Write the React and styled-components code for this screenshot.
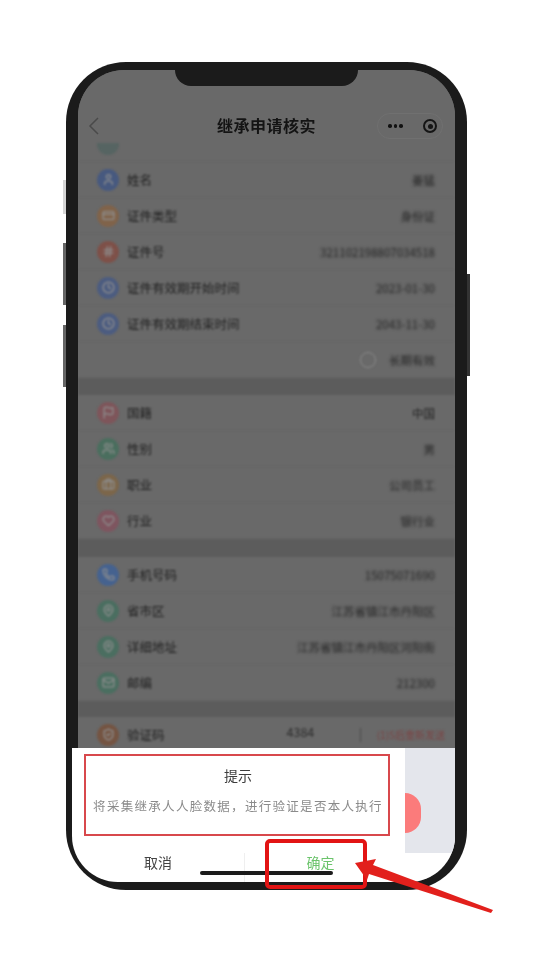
import React from 'react';
import styled, { createGlobalStyle } from 'styled-components';
import { User, CreditCard, Hash, Clock, Flag, Users, Briefcase, Heart, Phone as PhoneIcon, MapPin, Mail, ShieldCheck } from 'lucide-react';

const Global = createGlobalStyle`
  html, body { margin: 0; padding: 0; background: #fff; }
  body { font-family: "Noto Sans CJK SC", "Liberation Sans", sans-serif; }
`;

const Page = styled.div`
  position: relative;
  width: 539px;
  height: 957px;
  overflow: hidden;
  padding: 62px 0 0 66px;
  box-sizing: border-box;
  filter: blur(0.5px);
`;
const Device = styled.div`
  position: relative;
  width: 401px;
  height: 828px;
  box-sizing: border-box;
  padding: 8px 12px 8px 12px;
  background: #1b1b1b;
  border-radius: 60px;
`;
const SideKey = styled.span`
  position: absolute;
  top: ${p => p.$top}px;
  height: ${p => p.$h}px;
  width: 3px;
  background: ${p => p.$c};
  ${p => (p.$right ? 'right: -3px;' : 'left: -3px;')}
`;
const Screen = styled.div`
  display: flex;
  flex-direction: column;
  height: 100%;
  overflow: hidden;
  background: #696969;
  border-radius: 46px;
`;
const Notch = styled.div`
  position: absolute;
  z-index: 2;
  top: 6px;
  left: 109px;
  width: 183px;
  height: 18px;
  background: #1b1b1b;
  border-radius: 0 0 16px 16px;
`;
const NavBar = styled.header`
  flex: none;
  height: 73px;
  padding-top: 43px;
  box-sizing: border-box;
  display: grid;
  grid-template-columns: 1fr auto 1fr;
  align-items: start;
  background: #696969;
`;
const BackIcon = styled.svg`
  width: 12px;
  height: 20px;
  margin: 3px 0 0 10px;
`;
const Title = styled.h1`
  margin: 0;
  text-align: center;
  font-size: 16px;
  line-height: 24px;
  letter-spacing: 0.5px;
  font-weight: 700;
  color: #141414;
  filter: blur(0.3px);
`;
const Capsule = styled.div`
  justify-self: end;
  width: 66px;
  height: 26px;
  margin-right: 12px;
  display: flex;
  align-items: center;
  justify-content: space-between;
  padding: 0 5px 0 10px;
  box-sizing: border-box;
  border: 1px solid #707070;
  border-radius: 13px;
`;
const Dots = styled.span`
  display: flex;
  gap: 2px;
  i { width: 3.5px; height: 3.5px; border-radius: 50%; background: #111; }
`;
const Target = styled.span`
  width: 14px;
  height: 14px;
  box-sizing: border-box;
  border: 2px solid #151515;
  border-radius: 50%;
  display: flex;
  align-items: center;
  justify-content: center;
  &::after { content: ""; width: 5px; height: 5px; border-radius: 50%; background: #151515; }
`;
const List = styled.div`
  flex: 1;
  min-height: 0;
  overflow: hidden;
  filter: blur(0.8px);
`;
const Rows = styled.div`
  margin-top: ${p => p.$offset || 0}px;
`;
const Row = styled.div`
  height: 36px;
  box-sizing: border-box;
  display: flex;
  align-items: center;
  padding: 0 20px 0 19px;
  border-bottom: 1px solid #656565;
`;
const Badge = styled.span`
  flex: none;
  width: 22px;
  height: 22px;
  border-radius: 50%;
  background: ${p => p.$c};
  display: flex;
  align-items: center;
  justify-content: center;
  color: #8e8e8e;
  margin-right: 8px;
`;
const Label = styled.span`
  font-size: 12.5px;
  color: #222;
  white-space: nowrap;
`;
const Value = styled.span`
  margin-left: ${p => (p.$inline ? '0' : 'auto')};
  font-size: 11.5px;
  color: #222;
  white-space: nowrap;
  filter: blur(${p => (p.$sharp ? 0 : 1.2)}px);
`;
const Radio = styled.span`
  width: 16px;
  height: 16px;
  box-sizing: border-box;
  border: 1px solid #8a8a8a;
  border-radius: 50%;
  margin: 0 13px 0 auto;
`;
const Band = styled.div`
  height: ${p => p.$h}px;
  background: #5c5c5c;
`;
const Code = styled.span`
  font-size: 12.5px;
  color: #2c2c2c;
  margin-left: 122px;
  transform: translateY(-3px);
`;
const Resend = styled.span`
  margin-left: auto;
  margin-right: -10px;
  padding-left: 16px;
  border-left: 1px solid #4c4c4c;
  font-size: 10px;
  line-height: 14px;
  color: #7b4444;
  white-space: nowrap;
`;
const Sheet = styled.section`
  position: absolute;
  left: 6px;
  right: 12px;
  top: 686px;
  bottom: 8px;
  display: flex;
  flex-direction: column;
  background: #fff;
  border-radius: 0 0 46px 46px;
  overflow: hidden;
`;
const SheetTop = styled.div`
  flex: none;
  height: 105px;
  display: flex;
`;
const Message = styled.div`
  flex: none;
  width: 333px;
  padding: 17px 0 0 21px;
  box-sizing: border-box;
  text-align: center;
`;
const MessageTitle = styled.div`
  font-size: 14px;
  line-height: 20px;
  color: #3c3c3c;
  width: 290px;
`;
const MessageBody = styled.div`
  margin-top: 13px;
  font-size: 12.5px;
  letter-spacing: 1.3px;
  line-height: 16px;
  color: #8b8b8b;
  width: 290px;
  white-space: nowrap;
`;
const Behind = styled.div`
  flex: 1;
  background: #e4e6ec;
  display: flex;
  align-items: flex-start;
`;
const HalfDot = styled.span`
  width: 16px;
  height: 40px;
  margin-top: 45px;
  background: #fb7b7b;
  border-radius: 0 20px 20px 0;
`;
const Actions = styled.div`
  flex: 1;
  display: grid;
  grid-template-columns: 172px 152px;
`;
const Action = styled.div`
  text-align: center;
  font-size: 14px;
  line-height: 18px;
  color: ${p => p.$c};
  & + & { border-left: 1px solid #efefef; }
`;
const HomeBar = styled.div`
  position: absolute;
  left: 134px;
  top: 809px;
  width: 133px;
  height: 3.5px;
  border-radius: 2px;
  background: #1b1b1b;
`;
const Marker = styled.div`
  position: absolute;
  left: ${p => p.$l}px;
  top: ${p => p.$t}px;
  width: ${p => p.$w}px;
  height: ${p => p.$h}px;
  box-sizing: border-box;
  border: ${p => p.$b}px solid ${p => p.$c};
  border-radius: ${p => p.$r}px;
`;
const Arrow = styled.svg`
  position: absolute;
  left: 0;
  top: 0;
  width: 539px;
  height: 957px;
  pointer-events: none;
`;

const S = 13;
const first = [
  [User, '#47597f', '姓名', '姜猛'],
  [CreditCard, '#80634a', '证件类型', '身份证'],
  [Hash, '#7e5048', '证件号', '321102198807034518'],
  [Clock, '#4c5c80', '证件有效期开始时间', '2023-01-30'],
  [Clock, '#4c5c80', '证件有效期结束时间', '2043-11-30'],
];
const second = [
  [Flag, '#7e555a', '国籍', '中国', true],
  [Users, '#4a6e5e', '性别', '男'],
  [Briefcase, '#7c664a', '职业', '公司员工'],
  [Heart, '#7e555f', '行业', '银行业'],
];
const third = [
  [PhoneIcon, '#45628f', '手机号码', '15075071690'],
  [MapPin, '#4a6e60', '省市区', '江苏省镇江市丹阳区'],
  [MapPin, '#4a6e60', '详细地址', '江苏省镇江市丹阳区河阳街'],
  [Mail, '#4a6e60', '邮编', '212300'],
];

const renderRows = rows =>
  rows.map(([Icon, color, label, value, sharp]) => (
    <Row key={label}>
      <Badge $c={color}><Icon size={S} strokeWidth={2.4} /></Badge>
      <Label>{label}</Label>
      <Value $sharp={sharp}>{value}</Value>
    </Row>
  ));

export default function App() {
  return (
    <Page>
      <Global />
      <Device>
        <SideKey $top={118} $h={34} $c="#d5d5d5" />
        <SideKey $top={181} $h={62} $c="#666" />
        <SideKey $top={263} $h={62} $c="#666" />
        <SideKey $right $top={212} $h={102} $c="#333" />
        <Screen>
          <NavBar>
            <BackIcon viewBox="0 0 12 20" fill="none" stroke="#4a4a4a" strokeWidth="1.5">
              <path d="M10 2 L2 10 L10 18" />
            </BackIcon>
            <Title>继承申请核实</Title>
            <Capsule>
              <Dots><i /><i /><i /></Dots>
              <Target />
            </Capsule>
          </NavBar>
          <List>
            <Rows $offset={-17}>
              <Row><Badge $c="#566462" /></Row>
              {renderRows(first)}
              <Row>
                <Radio />
                <Value $inline>长期有效</Value>
              </Row>
            </Rows>
            <Band $h={17} />
            {renderRows(second)}
            <Band $h={18} />
            {renderRows(third)}
            <Band $h={16} />
            <Row>
              <Badge $c="#745442"><ShieldCheck size={S} strokeWidth={2.4} /></Badge>
              <Label>验证码</Label>
              <Code>4384</Code>
              <Resend>(1)S后重新发送</Resend>
            </Row>
          </List>
        </Screen>
        <Notch />
        <Sheet>
          <SheetTop>
            <Message>
              <MessageTitle>提示</MessageTitle>
              <MessageBody>将采集继承人人脸数据，进行验证是否本人执行</MessageBody>
            </Message>
            <Behind><HalfDot /></Behind>
          </SheetTop>
          <Actions>
            <Action $c="#444">取消</Action>
            <Action $c="#6cc46c">确定</Action>
          </Actions>
        </Sheet>
        <HomeBar />
        <Marker $l={18} $t={692} $w={306} $h={82} $b={2} $c="#d8484c" $r={0} />
        <Marker $l={199} $t={777} $w={102} $h={50} $b={4} $c="#e21414" $r={5} />
      </Device>
      <Arrow viewBox="0 0 539 957">
        <polygon points="355,863 376,859 373,865 493,910 491,913 369,874 367,880" fill="#e2201c" />
      </Arrow>
    </Page>
  );
}
